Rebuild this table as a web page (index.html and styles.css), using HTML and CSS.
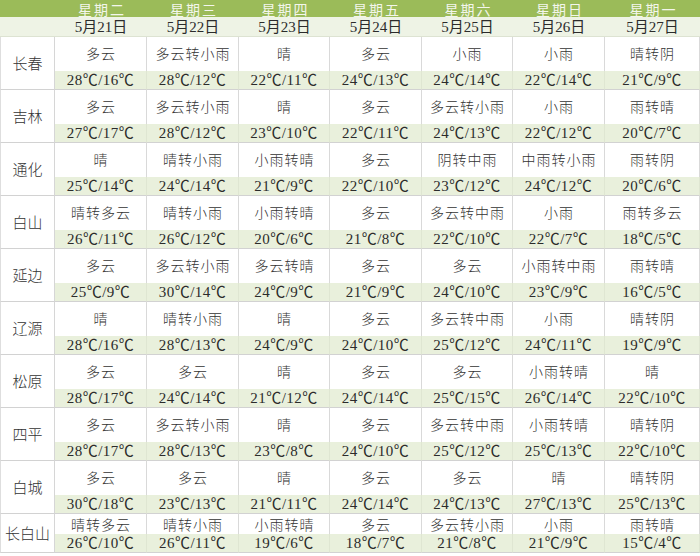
FILE: index.html
```html
<!DOCTYPE html>
<html lang="zh-CN">
<head>
<meta charset="utf-8">
<title>吉林省一周天气预报</title>
<link rel="stylesheet" href="styles.css">
</head>
<body>
<div class="forecast">
  <div class="hd corner"></div>
  <div class="hd">星期二</div>
  <div class="hd">星期三</div>
  <div class="hd">星期四</div>
  <div class="hd">星期五</div>
  <div class="hd">星期六</div>
  <div class="hd">星期日</div>
  <div class="hd">星期一</div>

  <div class="dt corner"></div>
  <div class="dt">5月21日</div>
  <div class="dt">5月22日</div>
  <div class="dt">5月23日</div>
  <div class="dt">5月24日</div>
  <div class="dt">5月25日</div>
  <div class="dt">5月26日</div>
  <div class="dt">5月27日</div>

  <div class="city">长春</div>
  <div class="wx">多云</div><div class="wx">多云转小雨</div><div class="wx">晴</div><div class="wx">多云</div><div class="wx">小雨</div><div class="wx">小雨</div><div class="wx">晴转阴</div>
  <div class="tp">28℃/16℃</div><div class="tp">28℃/12℃</div><div class="tp">22℃/11℃</div><div class="tp">24℃/13℃</div><div class="tp">24℃/14℃</div><div class="tp">22℃/14℃</div><div class="tp">21℃/9℃</div>

  <div class="city">吉林</div>
  <div class="wx">多云</div><div class="wx">多云转小雨</div><div class="wx">晴</div><div class="wx">多云</div><div class="wx">多云转小雨</div><div class="wx">小雨</div><div class="wx">雨转晴</div>
  <div class="tp">27℃/17℃</div><div class="tp">28℃/12℃</div><div class="tp">23℃/10℃</div><div class="tp">22℃/11℃</div><div class="tp">24℃/13℃</div><div class="tp">22℃/12℃</div><div class="tp">20℃/7℃</div>

  <div class="city">通化</div>
  <div class="wx">晴</div><div class="wx">晴转小雨</div><div class="wx">小雨转晴</div><div class="wx">多云</div><div class="wx">阴转中雨</div><div class="wx">中雨转小雨</div><div class="wx">雨转阴</div>
  <div class="tp">25℃/14℃</div><div class="tp">24℃/14℃</div><div class="tp">21℃/9℃</div><div class="tp">22℃/10℃</div><div class="tp">23℃/12℃</div><div class="tp">24℃/12℃</div><div class="tp">20℃/6℃</div>

  <div class="city">白山</div>
  <div class="wx">晴转多云</div><div class="wx">晴转小雨</div><div class="wx">小雨转晴</div><div class="wx">多云</div><div class="wx">多云转中雨</div><div class="wx">小雨</div><div class="wx">雨转多云</div>
  <div class="tp">26℃/11℃</div><div class="tp">26℃/12℃</div><div class="tp">20℃/6℃</div><div class="tp">21℃/8℃</div><div class="tp">22℃/10℃</div><div class="tp">22℃/7℃</div><div class="tp">18℃/5℃</div>

  <div class="city">延边</div>
  <div class="wx">多云</div><div class="wx">多云转小雨</div><div class="wx">多云转晴</div><div class="wx">多云</div><div class="wx">多云</div><div class="wx">小雨转中雨</div><div class="wx">雨转晴</div>
  <div class="tp">25℃/9℃</div><div class="tp">30℃/14℃</div><div class="tp">24℃/9℃</div><div class="tp">21℃/9℃</div><div class="tp">24℃/10℃</div><div class="tp">23℃/9℃</div><div class="tp">16℃/5℃</div>

  <div class="city">辽源</div>
  <div class="wx">晴</div><div class="wx">晴转小雨</div><div class="wx">晴</div><div class="wx">多云</div><div class="wx">多云转中雨</div><div class="wx">小雨</div><div class="wx">晴转阴</div>
  <div class="tp">28℃/16℃</div><div class="tp">28℃/13℃</div><div class="tp">24℃/9℃</div><div class="tp">24℃/10℃</div><div class="tp">25℃/12℃</div><div class="tp">24℃/11℃</div><div class="tp">19℃/9℃</div>

  <div class="city">松原</div>
  <div class="wx">多云</div><div class="wx">多云</div><div class="wx">晴</div><div class="wx">多云</div><div class="wx">多云</div><div class="wx">小雨转晴</div><div class="wx">晴</div>
  <div class="tp">28℃/17℃</div><div class="tp">24℃/14℃</div><div class="tp">21℃/12℃</div><div class="tp">24℃/14℃</div><div class="tp">25℃/15℃</div><div class="tp">26℃/14℃</div><div class="tp">22℃/10℃</div>

  <div class="city">四平</div>
  <div class="wx">多云</div><div class="wx">多云转小雨</div><div class="wx">晴</div><div class="wx">多云</div><div class="wx">多云转中雨</div><div class="wx">小雨转晴</div><div class="wx">晴转阴</div>
  <div class="tp">28℃/17℃</div><div class="tp">28℃/13℃</div><div class="tp">23℃/8℃</div><div class="tp">24℃/10℃</div><div class="tp">25℃/12℃</div><div class="tp">25℃/13℃</div><div class="tp">22℃/10℃</div>

  <div class="city">白城</div>
  <div class="wx">多云</div><div class="wx">多云</div><div class="wx">晴</div><div class="wx">多云</div><div class="wx">多云</div><div class="wx">晴</div><div class="wx">晴转阴</div>
  <div class="tp">30℃/18℃</div><div class="tp">23℃/13℃</div><div class="tp">21℃/11℃</div><div class="tp">24℃/14℃</div><div class="tp">24℃/13℃</div><div class="tp">27℃/13℃</div><div class="tp">25℃/13℃</div>

  <div class="city">长白山</div>
  <div class="wx last">晴转多云</div><div class="wx last">晴转小雨</div><div class="wx last">小雨转晴</div><div class="wx last">多云</div><div class="wx last">多云转小雨</div><div class="wx last">小雨</div><div class="wx last">雨转晴</div>
  <div class="tp">26℃/10℃</div><div class="tp">26℃/11℃</div><div class="tp">19℃/6℃</div><div class="tp">18℃/7℃</div><div class="tp">21℃/8℃</div><div class="tp">21℃/9℃</div><div class="tp">15℃/4℃</div>
</div>
</body>
</html>
```

FILE: styles.css
```css
html, body {
  margin: 0;
  padding: 0;
  background: #ffffff;
}

.forecast {
  display: grid;
  width: 700px;
  grid-template-columns: 55px 92px 92px 91px 92px 91px 92px 95px;
  grid-template-rows: 17px 20px repeat(9, 34px 19px) 20px 19px;
  font-family: "Liberation Serif", "Noto Sans CJK SC", serif;
  color: #2b2b2b;
  font-size: 15px;
}

.forecast > div {
  box-sizing: border-box;
  display: flex;
  align-items: center;
  justify-content: center;
  white-space: nowrap;
  overflow: hidden;
}

.hd {
  background: #9bbb59;
  color: #f3f6ec;
  font-family: "Noto Sans CJK SC", sans-serif;
  font-size: 14px;
  line-height: 16px;
  letter-spacing: 2px;
  padding-left: 2px;
  align-items: flex-end;
}

.dt {
  background: #eef3e5;
  border-bottom: 1px solid #dde3d2;
  font-size: 15px;
  line-height: 18px;
  align-items: flex-end;
  padding-bottom: 0;
}

.city {
  grid-row: span 2;
  background: #ffffff;
  font-family: "Noto Sans CJK SC", sans-serif;
  font-weight: 300;
  font-size: 15px;
  line-height: 18px;
  border-left: 1px solid #dedede;
  border-right: 1px solid #d6d6d6;
  border-bottom: 1px solid #d2d2d2;
  color: #333333;
}

.wx {
  background: #ffffff;
  font-family: "Noto Sans CJK SC", sans-serif;
  font-weight: 300;
  font-size: 14px;
  line-height: 18px;
  letter-spacing: 1px;
  color: #333333;
  border-right: 1px solid #d9d9d9;
  padding-bottom: 3px;
  padding-left: 1px;
}

.wx.last {
  padding-bottom: 0;
}

.tp {
  background: #e9f0dc;
  font-size: 15px;
  line-height: 18px;
  letter-spacing: 0.5px;
  border-right: 1px solid #dfe6d2;
  border-bottom: 1px solid #d2d2d2;
}
```
